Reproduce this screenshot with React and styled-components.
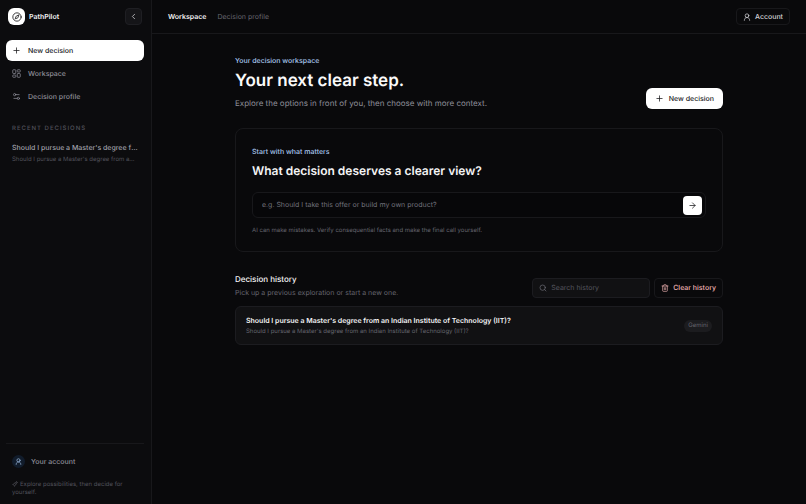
import React from 'react'
import styled, { createGlobalStyle } from 'styled-components'
import {
  ArrowRight,
  ChevronLeft,
  Compass,
  Plus,
  Search,
  Settings2,
  Trash2,
} from 'lucide-react'

const GlobalStyle = createGlobalStyle`
  *, *::before, *::after {
    box-sizing: border-box;
  }
  body {
    margin: 0;
    background: #09090b;
    color: #f4f4f5;
    font-family: Inter, 'Liberation Sans', sans-serif;
    font-size: 7px;
    line-height: 12px;
    text-rendering: geometricPrecision;
  }
  h1, h2, h3, p {
    margin: 0;
  }
  button, input {
    font: inherit;
    color: inherit;
    text-rendering: inherit;
  }
  button {
    cursor: pointer;
  }
  a {
    color: inherit;
    text-decoration: none;
  }
  svg {
    flex: none;
    display: block;
  }
`

const Shell = styled.div`
  display: flex;
  min-height: 100vh;
`

const Sidebar = styled.aside`
  display: flex;
  flex-direction: column;
  flex: none;
  width: 152px;
  padding: 8px 7px 7px 6px;
  background: #0c0c0e;
  border-right: 1px solid #18181b;
`

const BrandRow = styled.div`
  display: flex;
  align-items: center;
  justify-content: space-between;
  padding: 0 2px;
`

const Brand = styled.a`
  display: flex;
  align-items: center;
  gap: 4px;
  color: #f4f4f5;
  font-weight: 600;
`

const Logo = styled.span`
  display: grid;
  place-items: center;
  width: 17px;
  height: 17px;
  border-radius: 6px;
  background: #fff;
  color: #18181b;
`

const CollapseButton = styled.button`
  display: grid;
  place-items: center;
  width: 17px;
  height: 17px;
  padding: 0;
  border: 1px solid #1f1f23;
  border-radius: 4px;
  background: #151518;
  color: #d4d4d8;
`

const Nav = styled.nav`
  display: flex;
  flex-direction: column;
  gap: 2px;
  margin-top: 15px;
`

const NavItem = styled.a`
  display: flex;
  align-items: center;
  gap: 7px;
  height: 21px;
  padding: 0 6px;
  border-radius: 6px;
  font-weight: 500;
  color: ${({ $primary }) => ($primary ? '#18181b' : '#8e8e98')};
  background: ${({ $primary }) => ($primary ? '#fff' : 'transparent')};
`

const SideLabel = styled.h2`
  margin-top: 16px;
  padding: 0 6px;
  font-size: 6px;
  font-weight: 500;
  letter-spacing: 1px;
  text-transform: uppercase;
  color: #52525b;
`

const RecentItem = styled.a`
  display: block;
  margin-top: 7px;
  padding: 0 6px;
  color: #a1a1aa;
`

const Ellipsis = styled.span`
  display: block;
  overflow: hidden;
  white-space: nowrap;
  text-overflow: ellipsis;
  font-size: ${({ $small }) => ($small ? '6px' : '7px')};
  font-weight: ${({ $small }) => ($small ? 400 : 500)};
  color: ${({ $small }) => ($small ? '#52525b' : 'inherit')};
`

const SideFooter = styled.footer`
  margin-top: auto;
  border-top: 1px solid #18181b;
  padding: 7px 6px 0;
`

const AccountLink = styled.a`
  display: flex;
  align-items: center;
  gap: 6px;
  height: 21px;
  font-weight: 500;
  color: #8e8e98;
`

const Avatar = styled.span`
  display: grid;
  place-items: center;
  width: 13px;
  height: 13px;
  border-radius: 50%;
  background: #111c2b;
  color: #a9c8f0;
`

const Tagline = styled.p`
  margin-top: 9px;
  font-size: 6px;
  line-height: 8px;
  color: #52525b;

  svg {
    display: inline-block;
    vertical-align: middle;
    margin-right: 2px;
  }
`

const Main = styled.div`
  flex: 1;
  min-width: 0;
`

const TopBar = styled.header`
  display: flex;
  align-items: center;
  justify-content: space-between;
  height: 34px;
  padding: 0 16px;
  border-bottom: 1px solid #18181b;
`

const Tabs = styled.nav`
  display: flex;
  gap: 11px;
`

const Tab = styled.a`
  font-weight: ${({ $active }) => ($active ? 600 : 400)};
  color: ${({ $active }) => ($active ? '#f4f4f5' : '#65656e')};
`

const OutlineButton = styled.button`
  display: flex;
  flex: none;
  align-items: center;
  gap: 4px;
  height: ${({ $tall }) => ($tall ? '20px' : '17px')};
  padding: 0 6px;
  border: 1px solid #18181b;
  border-radius: 4px;
  background: transparent;
  font-weight: 500;
  color: ${({ $danger }) => ($danger ? '#f0b4b4' : '#d4d4d8')};
`

const Content = styled.main`
  max-width: 520px;
  margin: 0 auto;
  padding: 21px 16px;
`

const Intro = styled.section`
  display: flex;
  align-items: flex-end;
  justify-content: space-between;
`

const Eyebrow = styled.p`
  font-weight: 500;
  color: #a9c8f0;
`

const Title = styled.h1`
  margin-top: 4px;
  font-size: 17px;
  line-height: 20px;
  font-weight: 600;
  color: #fafafa;
`

const Lead = styled.p`
  margin-top: 6px;
  font-size: 8px;
  color: #8e8e98;
`

const PrimaryButton = styled.button`
  display: flex;
  flex: none;
  align-items: center;
  gap: 5px;
  height: 21px;
  padding: 0 9px;
  border: 0;
  border-radius: 6px;
  background: #fff;
  font-weight: 500;
  color: #18181b;
`

const AskCard = styled.form`
  margin-top: 19px;
  padding: 17px 16px 15px;
  border: 1px solid #18181b;
  border-radius: 8px;
`

const AskLabel = styled.label`
  display: block;
  margin-top: 4px;
  font-size: 12px;
  line-height: 18px;
  font-weight: 600;
  color: #f4f4f5;
`

const AskField = styled.div`
  display: flex;
  align-items: center;
  height: 26px;
  margin-top: 12px;
  padding: 0 3px 0 9px;
  border: 1px solid #18181b;
  border-radius: 6px;
  background: #070709;
`

const TextInput = styled.input`
  flex: 1;
  min-width: 0;
  padding: 0;
  border: 0;
  outline: 0;
  background: transparent;

  &::placeholder {
    color: ${({ $faint }) => ($faint ? '#55555e' : '#71717a')};
    opacity: 1;
  }
`

const SendButton = styled.button`
  display: grid;
  place-items: center;
  width: 19px;
  height: 19px;
  padding: 0;
  border: 0;
  border-radius: 4px;
  background: #fff;
  color: #18181b;
`

const Hint = styled.p`
  margin-top: 7px;
  font-size: 6px;
  line-height: 11px;
  color: #65656e;
`

const HistoryHead = styled.div`
  display: flex;
  align-items: center;
  justify-content: space-between;
  margin-top: 20px;
`

const HistoryTitle = styled.h2`
  font-size: 8px;
  line-height: 14px;
  font-weight: 500;
`

const HistoryNote = styled.p`
  margin-top: 1px;
  color: #65656e;
`

const Tools = styled.div`
  display: flex;
  gap: 4px;
  margin-top: 4px;
`

const SearchBox = styled.label`
  display: flex;
  align-items: center;
  gap: 4px;
  width: 118px;
  height: 20px;
  padding: 0 6px;
  border: 1px solid #1c1c20;
  border-radius: 4px;
  background: #111113;
  color: #71717a;
`

const HistoryCard = styled.a`
  display: flex;
  align-items: center;
  justify-content: space-between;
  margin-top: 7px;
  padding: 7px 10px;
  border: 1px solid #1c1c20;
  border-radius: 6px;
  background: #111113;
`

const HistoryName = styled.h3`
  font-size: 7px;
  line-height: 13px;
  font-weight: 600;
`

const HistoryText = styled.p`
  font-size: 6px;
  line-height: 10px;
  color: #65656e;
`

const Badge = styled.span`
  padding: 0 4px;
  border-radius: 6px;
  background: #1c1c1f;
  font-size: 6px;
  color: #65656e;
`

const UserIcon = ({ size }) => (
  <svg
    width={size}
    height={size}
    viewBox="0 0 24 24"
    fill="none"
    stroke="currentColor"
    strokeWidth="2.2"
    strokeLinecap="round"
    aria-hidden="true"
  >
    <circle cx="12" cy="8" r="5.5" />
    <path d="M4 22c0-5 3-8.500 8-8.500s8 3.500 8 8.500" />
  </svg>
)

const DashboardIcon = () => (
  <svg
    width="9"
    height="9"
    viewBox="0 0 24 24"
    fill="none"
    stroke="currentColor"
    strokeWidth="2"
    aria-hidden="true"
  >
    <rect x="2" y="2" width="8" height="10" rx="1.500" />
    <rect x="14" y="2" width="8" height="6" rx="1.500" />
    <rect x="14" y="12" width="8" height="10" rx="1.500" />
    <rect x="2" y="16" width="8" height="6" rx="1.500" />
  </svg>
)

const SparkIcon = () => (
  <svg
    width="6"
    height="6"
    viewBox="0 0 24 24"
    fill="none"
    stroke="currentColor"
    strokeWidth="2"
    strokeLinejoin="round"
    aria-hidden="true"
  >
    <path d="M10 7l2 5 5 2-5 2-2 6-2-6-6-2 6-2z" />
    <path d="M18 1l1 4 4 1-4 1-1 4-1-4-4-1 4-1z" />
  </svg>
)

const question =
  "Should I pursue a Master's degree from an Indian Institute of Technology (IIT)?"

const App = () => (
  <>
    <GlobalStyle />
    <Shell>
      <Sidebar>
        <BrandRow>
          <Brand href="#">
            <Logo>
              <Compass size={10} />
            </Logo>
            PathPilot
          </Brand>
          <CollapseButton type="button" aria-label="Collapse sidebar">
            <ChevronLeft size={9} />
          </CollapseButton>
        </BrandRow>
        <Nav>
          <NavItem href="#new" $primary>
            <Plus size={9} />
            New decision
          </NavItem>
          <NavItem href="#workspace">
            <DashboardIcon />
            Workspace
          </NavItem>
          <NavItem href="#profile">
            <Settings2 size={9} />
            Decision profile
          </NavItem>
        </Nav>
        <SideLabel>Recent decisions</SideLabel>
        <RecentItem href="#recent">
          <Ellipsis>{question}</Ellipsis>
          <Ellipsis $small>{question}</Ellipsis>
        </RecentItem>
        <SideFooter>
          <AccountLink href="#account">
            <Avatar>
              <UserIcon size={7} />
            </Avatar>
            Your account
          </AccountLink>
          <Tagline>
            <SparkIcon />
            Explore possibilities, then decide for yourself.
          </Tagline>
        </SideFooter>
      </Sidebar>
      <Main>
        <TopBar>
          <Tabs>
            <Tab href="#workspace" $active>
              Workspace
            </Tab>
            <Tab href="#profile">Decision profile</Tab>
          </Tabs>
          <OutlineButton type="button">
            <UserIcon size={8} />
            Account
          </OutlineButton>
        </TopBar>
        <Content>
          <Intro>
            <div>
              <Eyebrow>Your decision workspace</Eyebrow>
              <Title>Your next clear step.</Title>
              <Lead>
                Explore the options in front of you, then choose with more
                context.
              </Lead>
            </div>
            <PrimaryButton type="button">
              <Plus size={9} />
              New decision
            </PrimaryButton>
          </Intro>
          <AskCard onSubmit={(e) => e.preventDefault()}>
            <Eyebrow>Start with what matters</Eyebrow>
            <AskLabel htmlFor="decision">
              What decision deserves a clearer view?
            </AskLabel>
            <AskField>
              <TextInput
                id="decision"
                placeholder="e.g. Should I take this offer or build my own product?"
              />
              <SendButton type="submit" aria-label="Start exploring">
                <ArrowRight size={9} />
              </SendButton>
            </AskField>
            <Hint>
              AI can make mistakes. Verify consequential facts and make the
              final call yourself.
            </Hint>
          </AskCard>
          <HistoryHead>
            <div>
              <HistoryTitle>Decision history</HistoryTitle>
              <HistoryNote>
                Pick up a previous exploration or start a new one.
              </HistoryNote>
            </div>
            <Tools>
              <SearchBox>
                <Search size={8} />
                <TextInput
                  $faint
                  aria-label="Search history"
                  placeholder="Search history"
                />
              </SearchBox>
              <OutlineButton type="button" $tall $danger>
                <Trash2 size={8} />
                Clear history
              </OutlineButton>
            </Tools>
          </HistoryHead>
          <HistoryCard href="#history">
            <div>
              <HistoryName>{question}</HistoryName>
              <HistoryText>{question}</HistoryText>
            </div>
            <Badge>Gemini</Badge>
          </HistoryCard>
        </Content>
      </Main>
    </Shell>
  </>
)

export default App
